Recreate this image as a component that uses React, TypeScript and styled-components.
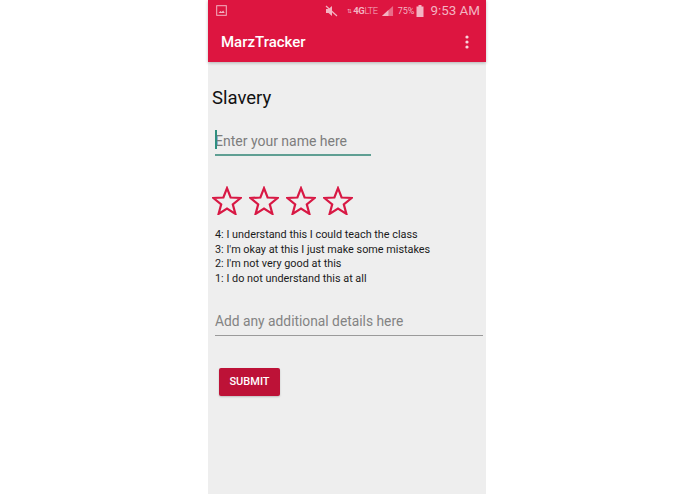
import React from "react";
import styled, { createGlobalStyle } from "styled-components";

const Global = createGlobalStyle`
  html, body { margin: 0; padding: 0; background: #fff; }
  body { font-family: Roboto, "Liberation Sans", sans-serif; }
`;
const Page = styled.div`
  width: 695px; height: 494px; display: flex; justify-content: center; overflow: hidden; background: #fff;
`;
const Phone = styled.div`
  width: 278px; margin-left: -1px; height: 494px; background: #eeeeee; display: flex; flex-direction: column;
`;
const AppBar = styled.header`
  height: 62px; background: #dd1540; color: #fff; box-shadow: 0 1px 3px rgba(0,0,0,.25); flex: none;
  display: flex; flex-direction: column;
`;
const StatusBar = styled.div`
  height: 21px; display: flex; align-items: center; padding: 0 6px 0 8px; color: #f3b4c2;
`;
const StatusRight = styled.div`
  margin-left: auto; display: flex; align-items: center;
`;
const StatusIcon = styled.svg<{ $left?: number }>`
  margin-left: ${p => p.$left || 0}px; flex: none;
`;
const Tiny = styled.span<{ $size: number; $weight?: number; $left?: number; $track?: number }>`
  font-size: ${p => p.$size}px; font-weight: ${p => p.$weight || 400}; margin-left: ${p => p.$left || 0}px; letter-spacing: ${p => p.$track || 0}px; white-space: nowrap;
`;
const TitleRow = styled.div`
  flex: 1; display: flex; align-items: center; justify-content: space-between; padding: 0 17px 0 13px;
`;
const Title = styled.div`
  font-size: 15px; font-weight: 500; color: #fff;
`;
const Content = styled.main`
  flex: 1; display: flex; flex-direction: column; padding: 0 3px 0 4px;
`;
const Heading = styled.h1`
  margin: 24px 0 0; font-size: 18.5px; line-height: 24px; font-weight: 400; color: #111;
`;
const NameField = styled.div`
  margin: 17px 0 0 3px; width: 156px; height: 27px; border-bottom: 2px solid #5f9f93; position: relative;
  font-size: 14px; line-height: 28px; color: #7d7d7d;
`;
const Caret = styled.span`
  position: absolute; left: 0; top: 3px; width: 1.5px; height: 19px; background: #2f8f7f;
`;
const Stars = styled.div`
  display: flex; gap: 7px; margin-top: 28px; height: 33px; align-items: center;
`;
const Legend = styled.div`
  margin: 11px 0 0 3px; font-size: 10.85px; line-height: 14.7px; color: #1b1b1b;
`;
const DetailsField = styled.div`
  margin: 18px 0 0 3px; height: 30px; border-bottom: 1.5px solid #9a9a9a; font-size: 13.8px; line-height: 33px; color: #838383;
`;
const Submit = styled.button`
  margin: 32px 0 0 7px; width: 61px; height: 28px; border: 0; border-radius: 2px; background: #bd1237; color: #fff;
  font: 500 11px Roboto, sans-serif; padding: 0; align-self: flex-start; box-shadow: 0 1px 2px rgba(0,0,0,.2);
`;

const Star = () => (
  <svg width="30" height="29" viewBox="0 0 30 29">
    <path d="M15 2.2l3.6 9.3 10 .5-7.8 6.3 2.6 9.6L15 22.5l-8.4 5.4 2.6-9.6L1.4 12l10-.5z" fill="none" stroke="#d81844" strokeWidth="2.2" strokeLinejoin="miter" />
  </svg>
);

export default function App() {
  return (
    <Page>
      <Global />
      <Phone>
        <AppBar>
          <StatusBar>
            <StatusIcon width="11" height="11" viewBox="0 0 11 11">
              <rect x=".7" y=".7" width="9.6" height="9.6" fill="none" stroke="#f3b4c2" strokeWidth="1" />
              <path d="M2.5 8l2-2 1.2 1 1.5-1.6L8.7 8z" fill="#f3b4c2" />
            </StatusIcon>
            <StatusRight>
              <StatusIcon width="13" height="12" viewBox="0 0 13 12">
                <path d="M1 4h2.5L7 1v10L3.5 8H1z" fill="#f3b4c2" />
                <path d="M1 1l11 10" stroke="#f3b4c2" strokeWidth="1.2" />
              </StatusIcon>
              <Tiny $size={6} $left={9}>⇅</Tiny>
              <Tiny $size={9.5} $weight={700} $track={-0.4} $left={1}>4G</Tiny>
              <Tiny $size={9.5} $weight={300} $track={-0.5}>LTE</Tiny>
              <StatusIcon $left={4} width="12" height="12" viewBox="0 0 13 12">
                <path d="M0 11.5L12 .5v11z" fill="#f3b4c2" opacity=".55" />
                <path d="M0 11.5L7 5v6.5z" fill="#f3b4c2" />
              </StatusIcon>
              <Tiny $size={9} $left={4}>75%</Tiny>
              <StatusIcon $left={2} width="8" height="12" viewBox="0 0 8 12">
                <path d="M2.5 0h3v1.5H7.5V12H.5V1.5h2z" fill="#f3b4c2" />
              </StatusIcon>
              <Tiny $size={13.4} $left={6}>9:53 AM</Tiny>
            </StatusRight>
          </StatusBar>
          <TitleRow>
            <Title>MarzTracker</Title>
            <svg width="4" height="14" viewBox="0 0 4 14">
              <circle cx="2" cy="2" r="1.6" fill="#f8d5dc" />
              <circle cx="2" cy="7" r="1.6" fill="#f8d5dc" />
              <circle cx="2" cy="12" r="1.6" fill="#f8d5dc" />
            </svg>
          </TitleRow>
        </AppBar>
        <Content>
          <Heading>Slavery</Heading>
          <NameField>
            <Caret />
            Enter your name here
          </NameField>
          <Stars>
            <Star /><Star /><Star /><Star />
          </Stars>
          <Legend>
            <div>4: I understand this I could teach the class</div>
            <div>3: I'm okay at this I just make some mistakes</div>
            <div>2: I'm not very good at this</div>
            <div>1: I do not understand this at all</div>
          </Legend>
          <DetailsField>Add any additional details here</DetailsField>
          <Submit>SUBMIT</Submit>
        </Content>
      </Phone>
    </Page>
  );
}
